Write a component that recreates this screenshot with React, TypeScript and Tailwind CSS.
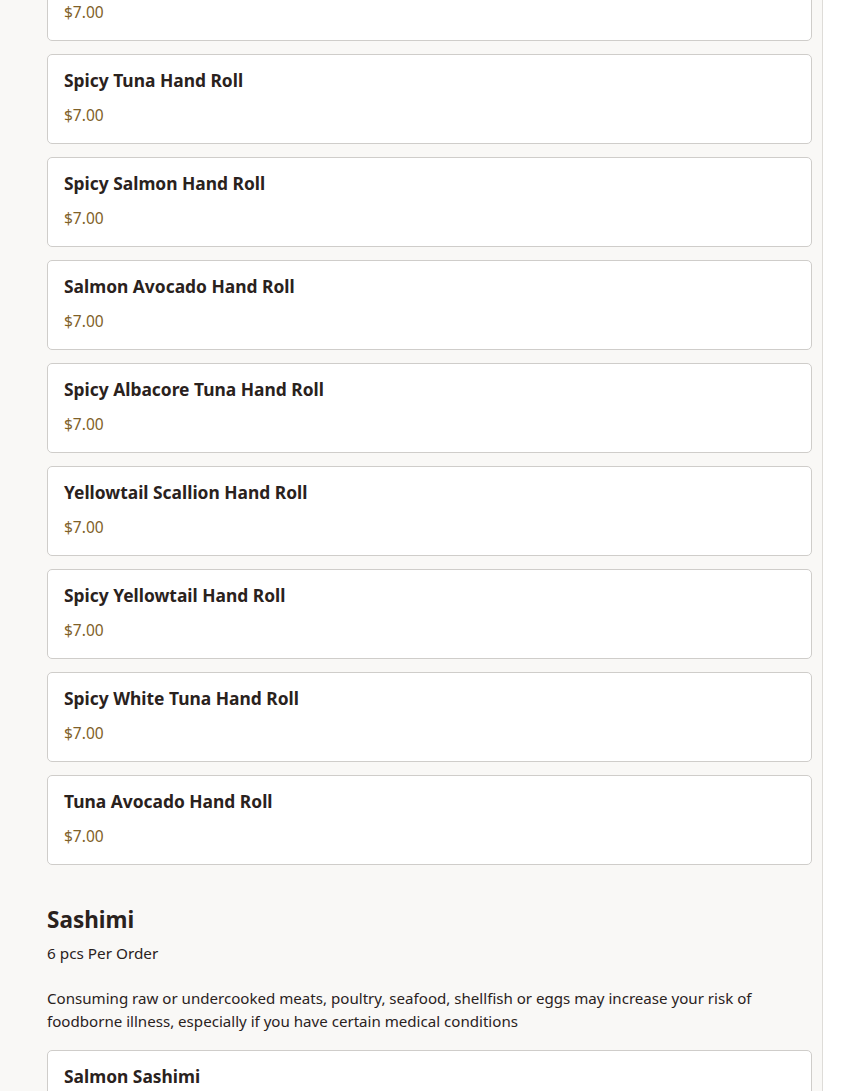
const handRolls = [
  "Salmon Hand Roll",
  "Spicy Tuna Hand Roll",
  "Spicy Salmon Hand Roll",
  "Salmon Avocado Hand Roll",
  "Spicy Albacore Tuna Hand Roll",
  "Yellowtail Scallion Hand Roll",
  "Spicy Yellowtail Hand Roll",
  "Spicy White Tuna Hand Roll",
  "Tuna Avocado Hand Roll",
]

function ItemCard({ name, price }: { name: string; price: string }) {
  return (
    <div className="rounded-[5px] border border-[#cfcdca] bg-white px-4 pt-[15px] pb-4">
      <h3 className="text-[17.4px] leading-5 font-bold text-[#2a221d]">{name}</h3>
      <p className="mt-[13px] text-[15.5px] leading-6 text-[#7f6128]">{price}</p>
    </div>
  )
}

export default function App() {
  return (
    <div
      className="flex min-h-screen bg-white"
      style={{ fontFamily: '"Noto Sans", "Open Sans", sans-serif' }}
    >
      <main className="h-[1091px] w-[823px] overflow-hidden border-r border-[#dedcd8] bg-[#f9f8f6]">
        <div className="-mt-[49px] pl-[47px] pr-[10px]">
          {/* Hand roll list */}
          <div className="flex flex-col gap-[13px]">
            {handRolls.map((name) => (
              <ItemCard key={name} name={name} price="$7.00" />
            ))}
          </div>

          {/* Sashimi section */}
          <section className="mt-[39px]">
            <h2 className="text-[22.5px] leading-8 font-bold text-[#2a221d]">Sashimi</h2>
            <p className="mt-[5px] text-[15.3px] leading-6 text-[#2a221d]">6 pcs Per Order</p>
            <p className="mt-[22px] text-[15.1px] leading-[23px] text-[#2a221d]">
              Consuming raw or undercooked meats, poultry, seafood, shellfish or eggs may increase
              your risk of foodborne illness, especially if you have certain medical conditions
            </p>
            <div className="mt-[17px] flex flex-col gap-[13px]">
              <ItemCard name="Salmon Sashimi" price="$14.00" />
            </div>
          </section>
        </div>
      </main>
    </div>
  )
}
